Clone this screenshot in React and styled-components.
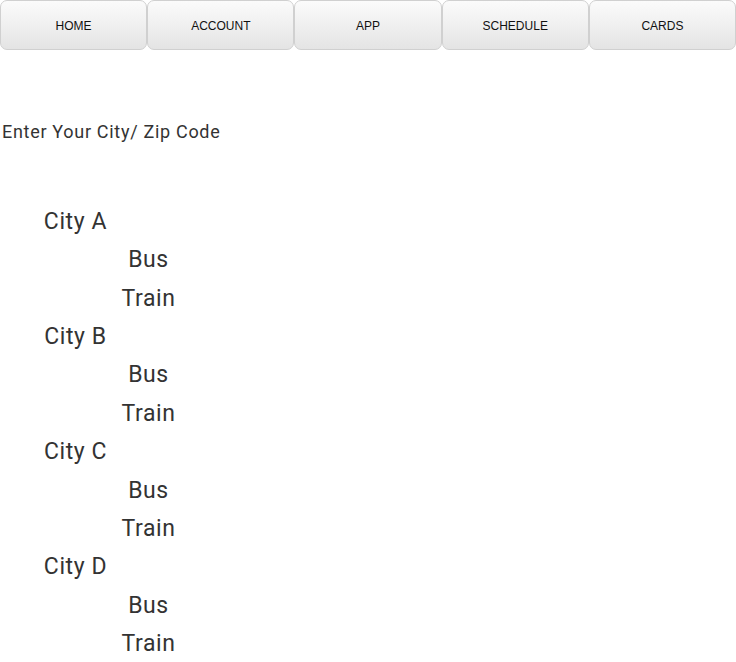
import React from "react";
import styled, { createGlobalStyle } from "styled-components";

const GlobalStyle = createGlobalStyle`
  body {
    margin: 0;
    background: #fff;
    font-family: Roboto, "Liberation Sans", sans-serif;
    color: #333;
  }
`;

const Nav = styled.nav`
  display: flex;
  width: 736px;
`;

const NavButton = styled.button`
  flex: 1;
  height: 50px;
  border: 1px solid #d0d0d0;
  border-radius: 7px;
  background: linear-gradient(#fbfbfb, #e4e4e4);
  font-family: "Liberation Sans", Arial, sans-serif;
  font-size: 12px;
  color: #111;
  text-transform: uppercase;
  padding: 1px 0 0;
`;

const Prompt = styled.p`
  margin: 70px 0 0 2px;
  font-size: 18px;
  line-height: 24px;
  letter-spacing: 0.7px;
  color: #333;
`;

const CityList = styled.ul`
  list-style: none;
  margin: 59px 0 0;
  padding: 0;
`;

const CityName = styled.div`
  width: 151px;
  text-align: center;
  font-size: 23px;
  line-height: 38.36px;
  letter-spacing: 0.6px;
`;

const ModeList = styled.ul`
  list-style: none;
  margin: 0;
  padding: 0 0 0 73px;
`;

const Mode = styled.li`
  width: 151px;
  text-align: center;
  font-size: 23px;
  line-height: 38.36px;
  letter-spacing: 0.6px;
`;

const tabs = ["Home", "Account", "App", "Schedule", "Cards"];
const cities = ["City A", "City B", "City C", "City D"];

export default function App() {
  return (
    <>
      <GlobalStyle />
      <Nav>
        {tabs.map((t) => (
          <NavButton key={t}>{t}</NavButton>
        ))}
      </Nav>
      <Prompt>Enter Your City/ Zip Code</Prompt>
      <CityList>
        {cities.map((c) => (
          <li key={c}>
            <CityName>{c}</CityName>
            <ModeList>
              <Mode>Bus</Mode>
              <Mode>Train</Mode>
            </ModeList>
          </li>
        ))}
      </CityList>
    </>
  );
}
